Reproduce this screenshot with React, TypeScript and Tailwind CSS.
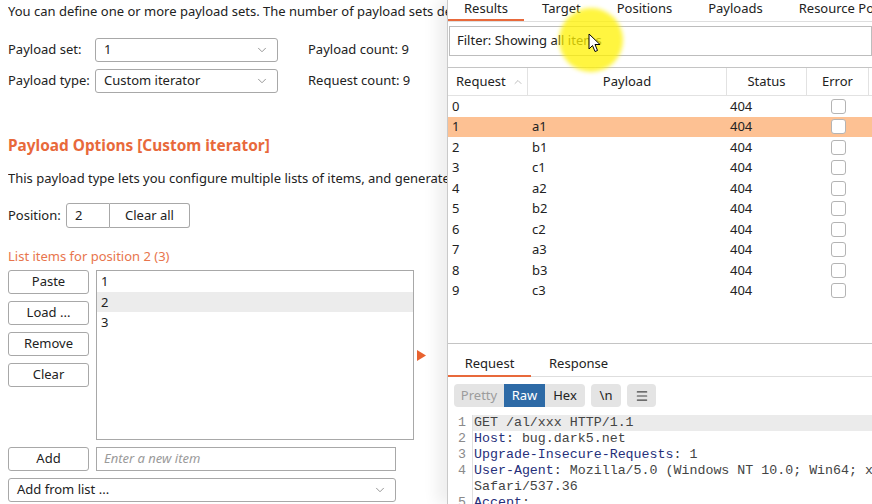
import { ChevronDown, ChevronUp, Menu } from "lucide-react";

const ui = "font-['Noto_Sans','Open_Sans',sans-serif]";
const mono = "font-['Liberation_Mono','Courier_New',monospace]";

const rows = [
  ["0", "", "404"],
  ["1", "a1", "404"],
  ["2", "b1", "404"],
  ["3", "c1", "404"],
  ["4", "a2", "404"],
  ["5", "b2", "404"],
  ["6", "c2", "404"],
  ["7", "a3", "404"],
  ["8", "b3", "404"],
  ["9", "c3", "404"],
];

function Select({ value, className }: { value: string; className: string }) {
  return (
    <div className={`h-6 flex items-center justify-between border border-[#a8a8a8] rounded-[3px] bg-white pl-[8px] pr-[8px] ${className}`}>
      <span>{value}</span>
      <ChevronDown className="w-[14px] h-[14px] text-[#888]" strokeWidth={1.5} />
    </div>
  );
}

function Btn({ label }: { label: string }) {
  return (
    <div className="w-[81px] h-6 flex items-center justify-center border border-[#a8a8a8] rounded-[3px] bg-white text-[#222]">
      {label}
    </div>
  );
}

function LeftPanel() {
  return (
    <div className={`w-[447px] shrink-0 h-full overflow-hidden pl-2 text-[13px] text-[#222] ${ui}`}>
      <div className="h-[22px] leading-[22px] whitespace-nowrap overflow-hidden">
        You can define one or more payload sets. The number of payload sets depends on the attack type defined in the Positions tab.
      </div>

      <div className="mt-[16px] flex items-center h-6">
        <span className="w-[87px]">Payload set:</span>
        <Select value="1" className="w-[183px]" />
        <span className="ml-[30px]">Payload count: 9</span>
      </div>
      <div className="mt-[7px] flex items-center h-6">
        <span className="w-[87px]">Payload type:</span>
        <Select value="Custom iterator" className="w-[183px]" />
        <span className="ml-[30px]">Request count: 9</span>
      </div>

      <div className="mt-[42px] h-[22px] leading-[22px] text-[15.4px] font-bold text-[#e8693b]">
        Payload Options [Custom iterator]
      </div>
      <div className="mt-[11px] h-[20px] leading-[20px] whitespace-nowrap overflow-hidden">
        This payload type lets you configure multiple lists of items, and generate payloads using all permutations of items in the lists.
      </div>

      <div className="mt-[15px] flex items-center h-[25px]">
        <span className="w-[58px]">Position:</span>
        <div className="h-[25px] w-[44px] border border-[#a8a8a8] rounded-l-[3px] flex items-center pl-[8px]">2</div>
        <div className="h-[25px] w-[80px] border border-l-0 border-[#a8a8a8] rounded-r-[3px] flex items-center justify-center">
          Clear all
        </div>
      </div>

      <div className="mt-[18px] h-[20px] leading-[20px] text-[#e8754d]">List items for position 2 (3)</div>

      <div className="mt-[4px] flex">
        <div className="flex flex-col gap-[7px]">
          <Btn label="Paste" />
          <Btn label="Load ..." />
          <Btn label="Remove" />
          <Btn label="Clear" />
        </div>
        <div className="ml-[7px] w-[318px] h-[170px] border border-[#a8a8a8] bg-white">
          <div className="h-[20.5px] leading-[20.5px] pl-[4px]">1</div>
          <div className="h-[20.5px] leading-[20.5px] pl-[4px] bg-[#ececec]">2</div>
          <div className="h-[20.5px] leading-[20.5px] pl-[4px]">3</div>
        </div>
        <div className="ml-[3px] flex items-center">
          <svg width="9" height="11" viewBox="0 0 9 11">
            <path d="M0 0 L9 5.5 L0 11 Z" fill="#e8622f" />
          </svg>
        </div>
      </div>

      <div className="mt-[7px] flex items-center">
        <Btn label="Add" />
        <div className="ml-[7px] w-[300px] h-6 border border-[#a8a8a8] flex items-center pl-[7px] italic text-[#9a9a9a]">
          Enter a new item
        </div>
      </div>
      <div className="mt-[7px]">
        <Select value="Add from list ..." className="w-[388px]" />
      </div>
    </div>
  );
}

function Checkbox() {
  return <div className="w-[15px] h-[15px] border border-[#b4b4b4] rounded-[3px] bg-white" />;
}

function CodeLine({ n, highlight, children }: { n: string; highlight?: boolean; children: React.ReactNode }) {
  return (
    <div className="flex h-[16px]">
      <div className="w-[24px] shrink-0 text-right pr-[6px] text-[#8a8a8a]">{n}</div>
      <div className={`flex-1 min-w-0 overflow-hidden pl-[1px] border-l border-[#e0e0e0] ${highlight ? "bg-[#ebebeb]" : ""}`}>
        {children}
      </div>
    </div>
  );
}

function RightPanel() {
  return (
    <div className={`relative flex-1 min-w-0 h-full bg-white border-l border-[#c9c9c9] shadow-[-10px_0_14px_rgba(0,0,0,0.07)] overflow-hidden text-[13px] text-[#222] ${ui}`}>
      {/* top tabs */}
      <div className="flex h-[22px] border-b border-[#dedede] whitespace-nowrap">
        <div className="shrink-0 px-[16px] h-[21px] leading-[17px] border-b-2 border-[#e8693b]">Results</div>
        <div className="shrink-0 px-[18px] leading-[17px]">Target</div>
        <div className="shrink-0 px-[18px] leading-[17px]">Positions</div>
        <div className="shrink-0 px-[18px] leading-[17px]">Payloads</div>
        <div className="shrink-0 pl-[18px] leading-[17px]">Resource Pool</div>
      </div>

      {/* filter */}
      <div className="mt-[4px] ml-[1px] h-[30px] border border-[#bdbdbd] flex items-center pl-[7px]">
        Filter: Showing all items
      </div>

      {/* results table */}
      <div className="mt-[11px] h-[277px] border-t border-b border-[#c4c4c4]">
        <div className="flex h-[28px] border-b border-[#e2e2e2]">
          <div className="w-[80px] flex items-center pl-[8px] border-r border-[#e2e2e2]">
            Request
            <ChevronUp className="ml-[6px] w-[12px] h-[12px] text-[#aaa]" strokeWidth={1.5} />
          </div>
          <div className="w-[199px] flex items-center justify-center border-r border-[#e2e2e2]">Payload</div>
          <div className="w-[80px] flex items-center justify-center border-r border-[#e2e2e2]">Status</div>
          <div className="w-[62px] flex items-center justify-center border-r border-[#e2e2e2]">Error</div>
        </div>
        {rows.map(([req, payload, status]) => (
          <div key={req} className={`flex h-[20.5px] items-center ${req === "1" ? "bg-[#fdc193]" : ""}`}>
            <div className="w-[80px] pl-[4px]">{req}</div>
            <div className="w-[199px] pl-[4px]">{payload}</div>
            <div className="w-[80px] pl-[3px]">{status}</div>
            <div className="w-[62px] flex justify-center">
              <Checkbox />
            </div>
          </div>
        ))}
      </div>

      {/* request / response tabs */}
      <div className="flex items-end h-[33px] border-b border-[#dedede]">
        <div className="w-[83px] text-center pb-[2px] border-b-2 border-[#e8693b] -mb-px">Request</div>
        <div className="pl-[18px] pb-[3px]">Response</div>
      </div>

      {/* toolbar */}
      <div className="mt-[7px] ml-[6px] flex items-center gap-[6px] h-[23px]">
        <div className="flex h-[23px] rounded-[4px] bg-[#e4e4e4] overflow-hidden">
          <div className="w-[50px] flex items-center justify-center text-[#9c9c9c]">Pretty</div>
          <div className="w-[41px] flex items-center justify-center bg-[#2d6aa6] text-white">Raw</div>
          <div className="w-[40px] flex items-center justify-center text-[#222]">Hex</div>
        </div>
        <div className="w-[30px] h-[23px] rounded-[4px] bg-[#e4e4e4] flex items-center justify-center">\n</div>
        <div className="w-[29px] h-[23px] rounded-[4px] bg-[#e4e4e4] flex items-center justify-center">
          <Menu className="w-[14px] h-[14px] text-[#444]" strokeWidth={2} />
        </div>
      </div>

      {/* raw request */}
      <div className={`mt-[8px] text-[13.3px] leading-[16px] whitespace-nowrap ${mono}`}>
        <CodeLine n="1" highlight>
          <span className="text-[#444]">GET /al/xxx HTTP/1.1</span>
        </CodeLine>
        <CodeLine n="2">
          <span className="text-[#252f7a]">Host</span>
          <span className="text-[#444]">: bug.dark5.net</span>
        </CodeLine>
        <CodeLine n="3">
          <span className="text-[#252f7a]">Upgrade-Insecure-Requests</span>
          <span className="text-[#444]">: 1</span>
        </CodeLine>
        <CodeLine n="4">
          <span className="text-[#252f7a]">User-Agent</span>
          <span className="text-[#444]">: Mozilla/5.0 (Windows NT 10.0; Win64; x64) AppleWebKit/537.36</span>
        </CodeLine>
        <CodeLine n="">
          <span className="text-[#444]">Safari/537.36</span>
        </CodeLine>
        <CodeLine n="5">
          <span className="text-[#252f7a]">Accept</span>
          <span className="text-[#444]">:</span>
        </CodeLine>
      </div>

      {/* screen recorder cursor highlight */}
      <div className="absolute left-[111px] top-[8px] w-[64px] h-[64px] rounded-full bg-[#fff200]/75 blur-[2px]" />
      <svg className="absolute left-[140px] top-[33px]" width="14" height="21" viewBox="0 0 14 21">
        <path d="M1 1 L1 16 L4.5 12.5 L7 18.5 L9.5 17.5 L7 11.5 L12 11.5 Z" fill="white" stroke="black" strokeWidth="1" strokeLinejoin="round" />
      </svg>
    </div>
  );
}

export default function App() {
  return (
    <div className="w-[872px] h-[504px] flex bg-white overflow-hidden">
      <LeftPanel />
      <RightPanel />
    </div>
  );
}
